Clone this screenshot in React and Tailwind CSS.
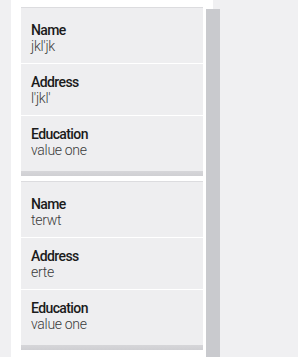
import React from 'react';

const records = [
  { name: "jkl'jk", address: "l'jkl'", education: 'value one' },
  { name: 'terwt', address: 'erte', education: 'value one' },
];

const Field = ({ label, value, last }) => (
  <div className={`pl-[10px] pt-[10px] pb-[9px] ${last ? '' : 'border-b border-white'}`}>
    <div className="text-[14px] leading-[16px] font-medium tracking-[-0.6px] text-[#1b1b1b]">{label}</div>
    <div className="text-[14px] leading-[16px] font-light tracking-[-0.3px] text-[#3a3a3a]">{value}</div>
  </div>
);

const RecordCard = ({ record }) => (
  <div className="mb-[5px]">
    <div className="border-t border-[#dcdcdf] bg-[#eeeef0] pt-[4px] pb-[4px]">
      <Field label="Name" value={record.name} />
      <Field label="Address" value={record.address} />
      <Field label="Education" value={record.education} last />
    </div>
    <div className="h-[5px] bg-gradient-to-b from-[#d6d6d9] to-[#cfcfd3]" />
  </div>
);

export default function App() {
  return (
    <div
      className="relative w-[298px] h-[357px] overflow-hidden bg-[#f0f0f2]"
      style={{ fontFamily: 'Roboto, "Noto Sans", sans-serif' }}
    >
      <div className="ml-[11px] w-[202px] h-full bg-white px-[10px] pt-[7px]">
        {records.map((r, i) => (
          <RecordCard key={i} record={r} />
        ))}
      </div>
      <div className="absolute left-[206px] top-[9px] w-[14px] bottom-0 bg-[#c9cace]" />
    </div>
  );
}
